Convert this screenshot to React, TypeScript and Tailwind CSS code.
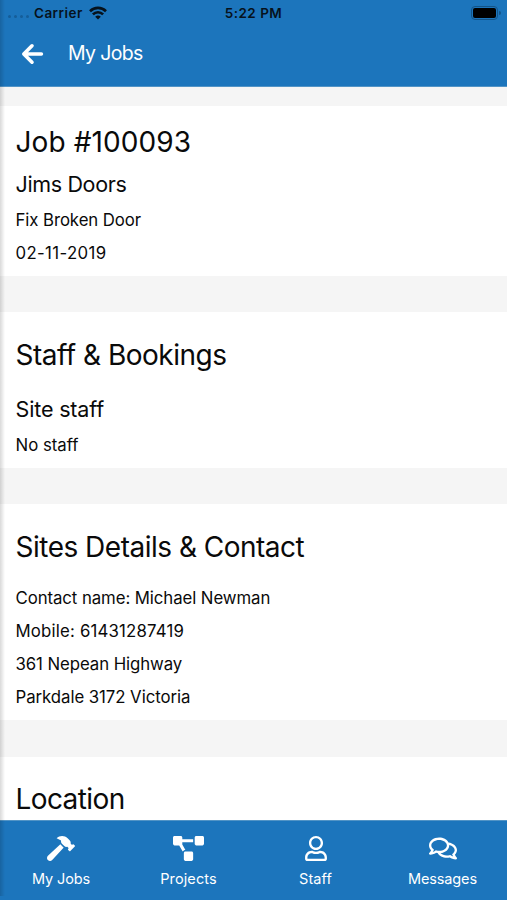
import React, { ReactNode } from 'react';
import { IconType } from 'react-icons';
import { FaHammer, FaProjectDiagram, FaRegComments, FaRegUser } from 'react-icons/fa';

interface Tab {
  label: string;
  icon: IconType;
  iconClass: string;
  labelClass: string;
}

const TABS: Tab[] = [
  { label: 'My Jobs', icon: FaHammer, iconClass: 'w-[28px] h-[25px] mr-[2px]', labelClass: 'tracking-[-0.15px] mr-px' },
  { label: 'Projects', icon: FaProjectDiagram, iconClass: 'w-[31px] h-[25px]', labelClass: 'tracking-[0.1px]' },
  { label: 'Staff', icon: FaRegUser, iconClass: 'w-[22px] h-[25px]', labelClass: 'tracking-[0.1px]' },
  { label: 'Messages', icon: FaRegComments, iconClass: 'w-[28px] h-[25px]', labelClass: 'tracking-[-0.15px]' },
];

function WifiIcon() {
  return (
    <svg className="w-[18px] h-[14px] ml-[6px]" viewBox="0 0 18 14" fill="none" stroke="currentColor" strokeWidth="2.6">
      <path d="M1 5.2a11.4 11.4 0 0 1 16 0" />
      <path d="M3.9 8.4a7.2 7.2 0 0 1 10.2 0" />
      <path d="M9 13.6 6.2 10.8a4 4 0 0 1 5.6 0z" fill="currentColor" stroke="none" />
    </svg>
  );
}

function BackArrow() {
  return (
    <svg className="w-[23px] h-[22px]" viewBox="0 0 23 22" fill="none" stroke="currentColor" strokeWidth="3.6" strokeLinecap="round" strokeLinejoin="round">
      <path d="M11 2.8 2.8 11l8.2 8.2M3.2 11h17.2" />
    </svg>
  );
}

function StatusBar() {
  return (
    <div className="h-[26px] grid grid-cols-3 items-center pl-2 pr-[6px] text-[13.5px] font-semibold text-[#06121c]">
      <div className="flex items-center">
        <div className="flex gap-[3px] w-[26px] pt-[7px]">
          {[0, 1, 2, 3].map((dot) => (
            <span key={dot} className="w-[3px] h-[3px] rounded-full bg-[#155e99]" />
          ))}
        </div>
        <span className="tracking-[0.45px]">Carrier</span>
        <WifiIcon />
      </div>
      <div className="text-center tracking-[0.5px] pr-[2px]">5:22 PM</div>
      <div className="flex items-center justify-end gap-px">
        <div className="w-[27px] h-[14px] rounded-[4px] border border-[#135488] p-px">
          <div className="w-full h-full rounded-[2px] bg-black" />
        </div>
        <div className="w-[2px] h-[4px] rounded-r-full bg-[#135488]" />
      </div>
    </div>
  );
}

function Card({ className, children }: { className: string; children: ReactNode }) {
  return <section className={`bg-white pl-[15.5px] pr-4 shrink-0 ${className}`}>{children}</section>;
}

function Title({ className = '', children }: { className?: string; children: ReactNode }) {
  return <h2 className={`text-[28px] leading-[36px] whitespace-nowrap ${className}`}>{children}</h2>;
}

function Line({ className = '', children }: { className?: string; children: ReactNode }) {
  return <p className={`text-[16.8px] leading-[33px] whitespace-nowrap ${className}`}>{children}</p>;
}

export default function App() {
  return (
    <div className="relative w-full h-[900px] flex flex-col overflow-hidden bg-[#f5f5f5] text-[#0a0a0a] font-['Inter',sans-serif]">
      {/* Header */}
      <header className="h-[87px] shrink-0 bg-[#1c75bc] border-b border-[#5294c6]">
        <StatusBar />
        <div className="h-[55px] flex items-center pl-[21px] text-white">
          <BackArrow />
          <h1 className="ml-6 text-[19.5px] tracking-[-0.65px]">My Jobs</h1>
        </div>
      </header>

      {/* Job details */}
      <main className="flex-1 min-h-0 overflow-hidden flex flex-col pt-[19px]">
        <Card className="h-[170px] pt-[18px]">
          <Title className="tracking-[0.1px]">Job #100093</Title>
          <h3 className="mt-[9px] text-[21.5px] leading-[30px] tracking-[-0.35px]">Jims Doors</h3>
          <Line className="mt-[5px] tracking-[-0.08px]">Fix Broken Door</Line>
          <Line className="tracking-[0.35px]">02-11-2019</Line>
        </Card>

        <Card className="h-[156px] mt-9 pt-[25px]">
          <Title className="tracking-[-0.5px]">Staff &amp; Bookings</Title>
          <h3 className="mt-[21px] text-[21.5px] leading-[30px] tracking-[-0.15px]">Site staff</h3>
          <Line className="mt-[5px]">No staff</Line>
        </Card>

        <Card className="h-[216px] mt-9 pt-[25px]">
          <Title className="tracking-[-0.5px]">Sites Details &amp; Contact</Title>
          <Line className="mt-[17px] tracking-[-0.08px]">Contact name: Michael Newman</Line>
          <Line className="tracking-[0.18px]">Mobile: 61431287419</Line>
          <Line className="tracking-[-0.08px]">361 Nepean Highway</Line>
          <Line className="tracking-[-0.06px]">Parkdale 3172 Victoria</Line>
        </Card>

        <Card className="h-[64px] mt-[37px] pt-[24px]">
          <Title className="tracking-[-0.6px]">Location</Title>
        </Card>
      </main>

      {/* Bottom tabs */}
      <nav className="h-[80px] shrink-0 grid grid-cols-4 gap-px bg-[#1c75bc] border-t border-[#5294c6] text-white">
        {TABS.map(({ label, icon: Icon, iconClass, labelClass }) => (
          <div key={label} className="flex flex-col items-center pt-[15px] pr-[3px]">
            <Icon className={iconClass} />
            <span className={`mt-[8px] text-[14.5px] leading-[20px] ${labelClass}`}>{label}</span>
          </div>
        ))}
      </nav>

      {/* Edge shadow of the stacked screen */}
      <div className="absolute left-0 top-0 w-[5px] h-[896px] bg-gradient-to-r from-black/15 to-transparent pointer-events-none" />
    </div>
  );
}
